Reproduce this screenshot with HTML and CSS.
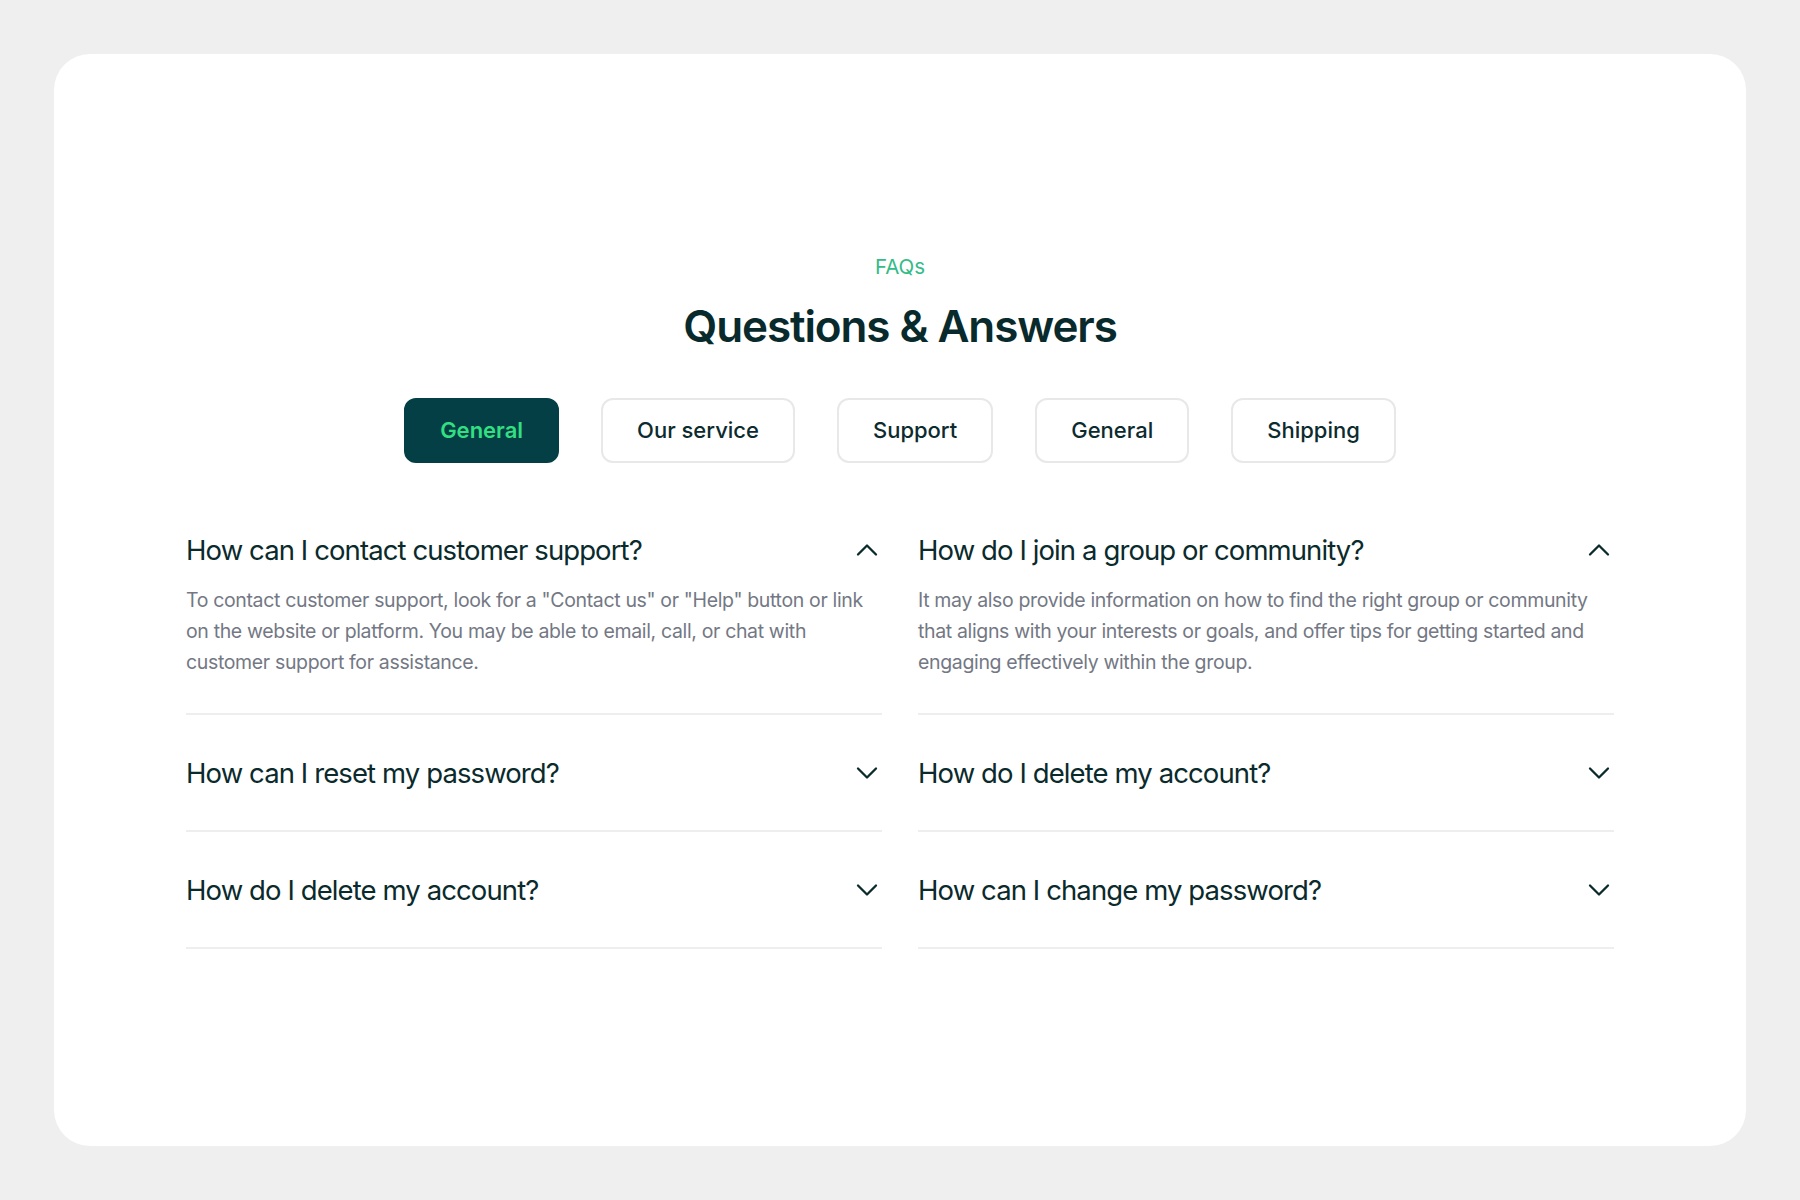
FILE: index.html
```html
<!DOCTYPE html>
<html lang="en">
<head>
<meta charset="utf-8">
<title>FAQs</title>
<link rel="stylesheet" href="styles.css">
</head>
<body>
<main class="card">
  <p class="eyebrow">FAQs</p>
  <h1 class="title">Questions &amp; Answers</h1>
  <nav class="tabs">
    <button class="tab tab-active">General</button>
    <button class="tab">Our service</button>
    <button class="tab">Support</button>
    <button class="tab">General</button>
    <button class="tab">Shipping</button>
  </nav>
  <section class="faq-grid">
    <div class="faq-col">
      <div class="faq-item open">
        <div class="faq-q"><span>How can I contact customer support?</span>
          <svg class="chev" viewBox="0 0 30 30"><path d="M6 19.5 15 10.5 24 19.5"/></svg></div>
        <p class="faq-a">To contact customer support, look for a "Contact us" or "Help" button or link on the website or platform. You may be able to email, call, or chat with customer support for assistance.</p>
      </div>
      <div class="faq-item">
        <div class="faq-q"><span>How can I reset my password?</span>
          <svg class="chev" viewBox="0 0 30 30"><path d="M6 10.5 15 19.5 24 10.5"/></svg></div>
      </div>
      <div class="faq-item">
        <div class="faq-q"><span>How do I delete my account?</span>
          <svg class="chev" viewBox="0 0 30 30"><path d="M6 10.5 15 19.5 24 10.5"/></svg></div>
      </div>
    </div>
    <div class="faq-col">
      <div class="faq-item open">
        <div class="faq-q"><span>How do I join a group or community?</span>
          <svg class="chev" viewBox="0 0 30 30"><path d="M6 19.5 15 10.5 24 19.5"/></svg></div>
        <p class="faq-a">It may also provide information on how to find the right group or community that aligns with your interests or goals, and offer tips for getting started and engaging effectively within the group.</p>
      </div>
      <div class="faq-item">
        <div class="faq-q"><span>How do I delete my account?</span>
          <svg class="chev" viewBox="0 0 30 30"><path d="M6 10.5 15 19.5 24 10.5"/></svg></div>
      </div>
      <div class="faq-item">
        <div class="faq-q"><span>How can I change my password?</span>
          <svg class="chev" viewBox="0 0 30 30"><path d="M6 10.5 15 19.5 24 10.5"/></svg></div>
      </div>
    </div>
  </section>
</main>
</body>
</html>
```

FILE: styles.css
```css
* { box-sizing: border-box; }
html, body { margin: 0; }
body {
  background: #efefef;
  padding: 54px;
  font-family: Inter, "Noto Sans", sans-serif;
}
.card {
  background: #ffffff;
  border-radius: 36px;
  height: 1092px;
  padding: 201px 132px 0;
  display: flex;
  flex-direction: column;
  align-items: center;
}
.eyebrow {
  margin: 0;
  font-size: 20.5px;
  line-height: 24px;
  color: #33bb88;
  font-weight: 400;
}
.title {
  margin: 21px 0 0;
  font-size: 44px;
  line-height: 52px;
  font-weight: 600;
  color: #082a2c;
  letter-spacing: -1.1px;
}
.tabs {
  margin-top: 46px;
  display: flex;
  gap: 42px;
}
.tab {
  font-family: Inter, "Noto Sans", sans-serif;
  font-size: 22px;
  line-height: 27px;
  font-weight: 500;
  color: #0c2b2e;
  background: #fff;
  border: 2px solid #e8e8e8;
  border-radius: 12px;
  padding: 17px 34px;
  cursor: pointer;
}
.tab-active {
  background: #033f45;
  border-color: #033f45;
  color: #32df81;
  font-weight: 600;
}
.faq-grid {
  margin-top: 30px;
  width: 100%;
  display: grid;
  grid-template-columns: 1fr 1fr;
  column-gap: 36px;
}
.faq-item {
  padding: 40px 0 39px;
  border-bottom: 2px solid #eeeeee;
}
.faq-item.open {
  padding: 39px 0 35px;
}
.faq-q {
  display: flex;
  align-items: center;
  justify-content: space-between;
  font-size: 27.5px;
  line-height: 36px;
  font-weight: 400;
  color: #0a2a2c;
  letter-spacing: -0.9px;
}
.chev {
  width: 30px;
  height: 30px;
  flex: none;
  fill: none;
  stroke: #0a2a2c;
  stroke-width: 2.3;
  stroke-linecap: round;
  stroke-linejoin: round;
}
.faq-a {
  margin: 17px 0 0;
  font-size: 19.5px;
  line-height: 31px;
  color: #737884;
  letter-spacing: -0.35px;
}
```
